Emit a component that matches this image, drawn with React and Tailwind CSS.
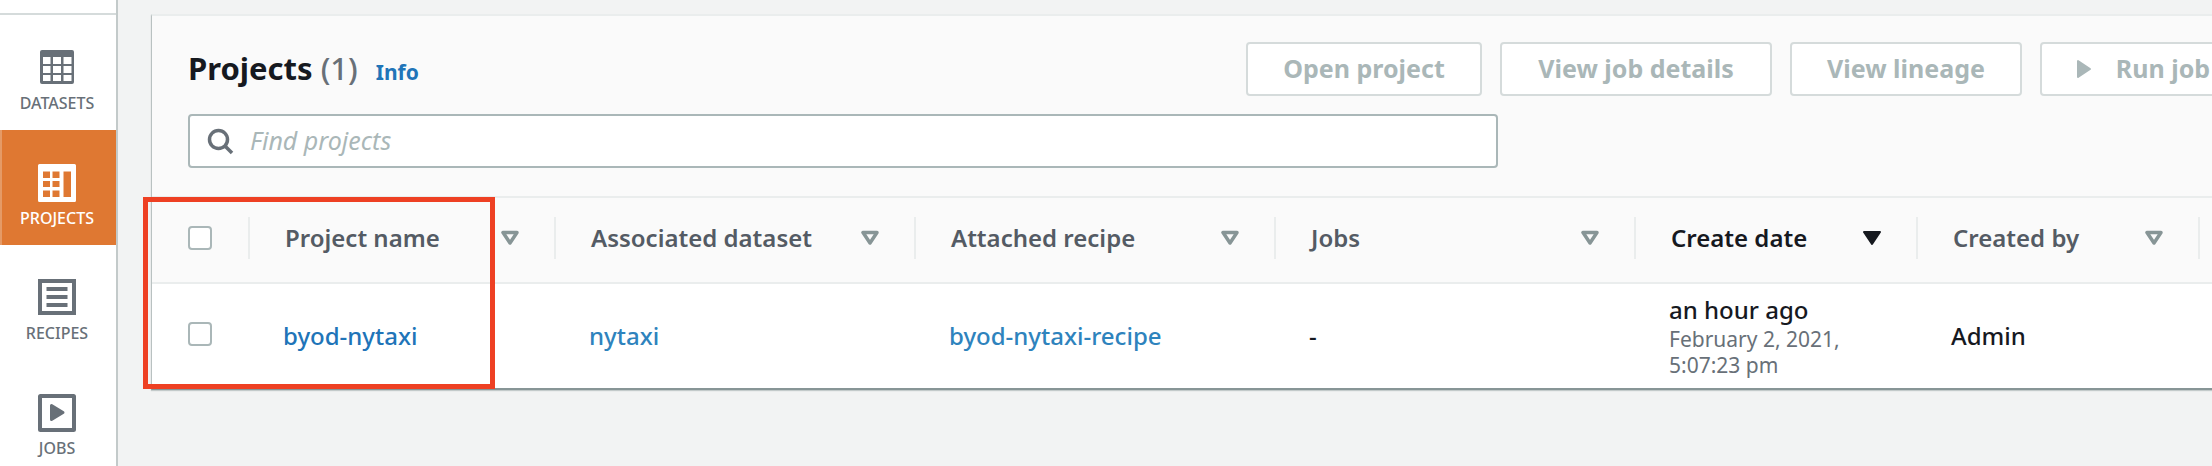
const navItems = [
  { label: 'DATASETS', icon: DatasetsIcon },
  { label: 'PROJECTS', icon: ProjectsIcon, active: true },
  { label: 'RECIPES', icon: RecipesIcon },
  { label: 'JOBS', icon: JobsIcon },
];

const columns = [
  { label: 'Project name' },
  { label: 'Associated dataset' },
  { label: 'Attached recipe' },
  { label: 'Jobs' },
  { label: 'Create date', sorted: true },
  { label: 'Created by' },
];

function DatasetsIcon() {
  return (
    <svg width="38" height="38" viewBox="0 0 38 38" fill="currentColor" fillRule="evenodd" aria-hidden="true">
      <path d="M4 1h30a2 2 0 0 1 2 2v30a2 2 0 0 1-2 2H4a2 2 0 0 1-2-2V3a2 2 0 0 1 2-2zM5 8v7h7.500V8zM15 8v7h8V8zM25.500 8v7H33.500V8zM5 17v7h7.500v-7zM15 17v7h8v-7zM25.500 17v7H33.500v-7zM5 26v6h7.500v-6zM15 26v6h8v-6zM25.500 26v6H33.500v-6z" />
    </svg>
  );
}

function ProjectsIcon() {
  return (
    <svg width="38" height="38" viewBox="0 0 38 38" fill="currentColor" fillRule="evenodd" aria-hidden="true">
      <path d="M1.500 0h35A1.500 1.500 0 0 1 38 1.500v35a1.500 1.500 0 0 1-1.500 1.500h-35A1.500 1.500 0 0 1 0 36.500v-35A1.500 1.500 0 0 1 1.500 0zM5 7.500v6.500h7V7.500zM14.500 7.500v6.500h7V7.500zM5 17v6h7v-6zM14.500 17v6h7v-6zM5 26.500v6.500h7v-6.500zM14.500 26.500v6.500h7v-6.500zM25.500 7.500v25.500H33V7.500z" />
    </svg>
  );
}

function RecipesIcon() {
  return (
    <svg width="38" height="38" viewBox="0 0 38 38" fill="none" stroke="currentColor" strokeWidth="4" aria-hidden="true">
      <path d="M2 2h34v32H2zM8.500 10h21M8.500 18h21M8.500 26h21" />
    </svg>
  );
}

function JobsIcon() {
  return (
    <svg width="38" height="38" viewBox="0 0 38 38" fill="none" stroke="currentColor" strokeWidth="4" strokeLinejoin="round" aria-hidden="true">
      <rect x="2" y="2" width="34" height="34" rx="0.500" />
      <path d="M13.500 11.500v14l11.500-7z" fill="currentColor" strokeWidth="3" />
    </svg>
  );
}

function SearchIcon() {
  return (
    <svg width="28" height="28" viewBox="0 0 28 28" fill="none" stroke="currentColor" strokeWidth="3.500" aria-hidden="true">
      <circle cx="12.500" cy="12.500" r="9" />
      <path d="M19 19l7 7" />
    </svg>
  );
}

function PlayIcon() {
  return (
    <svg width="16" height="20" viewBox="0 0 16 20" fill="currentColor" stroke="currentColor" strokeWidth="2" strokeLinejoin="round" aria-hidden="true">
      <path d="M2 2v16l12-8z" />
    </svg>
  );
}

function SortIcon({ filled }) {
  return (
    <svg width="18" height="16" viewBox="0 0 18 16" fill={filled ? 'currentColor' : 'none'} stroke="currentColor" strokeWidth={filled ? 2 : 3.5} strokeLinejoin="round" aria-hidden="true">
      <path d={filled ? 'M1 2h16L9 14z' : 'M2 2.500h14L9 13z'} />
    </svg>
  );
}

function Checkbox({ label }) {
  return (
    <input
      type="checkbox"
      aria-label={label}
      className="block size-6 appearance-none rounded-sm border-2 border-[#aab7b8] bg-white checked:bg-[#2074b8]"
    />
  );
}

function ActionButton({ children, className }) {
  return (
    <button
      type="button"
      disabled
      className={`flex h-[54px] shrink-0 items-center justify-center rounded-sm border-2 border-[#d5dbdb] bg-white text-[25px] font-bold whitespace-nowrap text-[#aab7b8] ${className}`}
    >
      {children}
    </button>
  );
}

function Sidebar() {
  return (
    <nav className="w-[118px] shrink-0 border-r-2 border-[#c3caca] bg-white">
      <div className="h-[15px] border-b-2 border-[#d5dbdb]" />
      <ul>
        {navItems.map(({ label, icon: Icon, active }) => (
          <li key={label}>
            <a
              href="#"
              className={`flex h-[115px] flex-col items-center gap-1 border-l-2 pt-[34px] pr-1 text-base font-medium ${
                active ? 'border-[#e59a66] bg-[#df7832] text-white' : 'border-transparent text-[#687078]'
              }`}
            >
              <Icon />
              {label}
            </a>
          </li>
        ))}
      </ul>
    </nav>
  );
}

function ProjectsTable() {
  return (
    <table className="w-full table-fixed border-separate border-spacing-0 text-left text-2xl">
      <colgroup>
        <col className="w-[98px]" />
        <col className="w-[306px]" />
        <col className="w-[360px]" />
        <col className="w-[360px]" />
        <col className="w-[360px]" />
        <col className="w-[282px]" />
        <col className="w-[282px]" />
        <col />
      </colgroup>
      <thead className="bg-[#fafafa] text-[#545b64]">
        <tr className="h-[88px]">
          <th className="border-y-2 border-[#eaeded] p-0 pb-1">
            <div className="flex h-[42px] items-center border-r-2 border-[#eaeded] pl-9">
              <Checkbox label="Select all projects" />
            </div>
          </th>
          {columns.map(({ label, sorted }) => (
            <th key={label} className="border-y-2 border-[#eaeded] p-0 pb-1">
              <button
                type="button"
                className={`flex h-[42px] w-full items-center justify-between border-r-2 border-[#eaeded] px-[35px] font-semibold ${
                  sorted ? 'text-[#16191f]' : ''
                }`}
              >
                {label}
                <span className={sorted ? 'text-[#16191f]' : 'text-[#879596]'}>
                  <SortIcon filled={sorted} />
                </span>
              </button>
            </th>
          ))}
          <th className="border-y-2 border-[#eaeded] p-0" />
        </tr>
      </thead>
      <tbody className="bg-white font-medium text-[#16191f]">
        <tr className="h-[104px]">
          <td className="p-0 pb-1 pl-9">
            <Checkbox label="Select byod-nytaxi" />
          </td>
          <td className="p-0 pl-[33px]">
            <a href="#" className="text-[#2074b8]">byod-nytaxi</a>
          </td>
          <td className="p-0 pl-[33px]">
            <a href="#" className="text-[#2e83bd]">nytaxi</a>
          </td>
          <td className="p-0 pl-[33px]">
            <a href="#" className="text-[#2e83bd]">byod-nytaxi-recipe</a>
          </td>
          <td className="p-0 pl-[33px]">-</td>
          <td className="p-0 pr-9 pl-[33px]">
            <div className="leading-8">an hour ago</div>
            <div className="text-[21px] leading-[26px] font-normal text-[#687078]">February 2, 2021, 5:07:23 pm</div>
          </td>
          <td className="p-0 pl-[33px]">Admin</td>
          <td className="p-0" />
        </tr>
      </tbody>
    </table>
  );
}

export default function App() {
  return (
    <div className="flex min-h-screen overflow-hidden bg-[#f2f3f3] font-['Noto_Sans','Open_Sans',sans-serif]">
      <Sidebar />
      <main className="min-w-0 flex-1 pt-3.5 pl-[33px]">
        <section className="relative -mr-[70px] border-t-2 border-b-2 border-l border-t-[#eaeded] border-b-[#879596] border-l-[#b9c1c1] bg-[#fafafa] shadow-[0_1px_1px_#c3caca]">
          <header className="flex flex-col gap-[18px] px-9 pt-[26px] pb-7">
            <div className="flex items-center justify-between">
              <div className="flex items-baseline gap-[18px]">
                <h1 className="text-[31px] leading-9 font-bold text-[#16191f]">
                  Projects <span className="font-medium text-[#687078]">(1)</span>
                </h1>
                <a href="#" className="text-[21px] font-bold text-[#2074b8]">Info</a>
              </div>
              <div className="flex gap-[18px]">
                <ActionButton className="w-[236px]">Open project</ActionButton>
                <ActionButton className="w-[272px]">View job details</ActionButton>
                <ActionButton className="w-[232px]">View lineage</ActionButton>
                <ActionButton className="w-[206px] gap-6">
                  <PlayIcon />
                  Run job
                </ActionButton>
              </div>
            </div>
            <label className="flex h-[54px] w-full max-w-[1310px] items-center gap-4 rounded-sm border-2 border-[#aab7b8] bg-white px-4 text-[#687078]">
              <SearchIcon />
              <input
                type="search"
                aria-label="Find projects"
                placeholder="Find projects"
                className="min-w-0 flex-1 text-[25px] text-[#16191f] outline-none placeholder:text-[#aab7b8] placeholder:italic"
              />
            </label>
          </header>
          <ProjectsTable />
          <div className="pointer-events-none absolute -bottom-px -left-[9px] h-[192px] w-[352px] border-[5px] border-[#ee4023]" />
        </section>
      </main>
    </div>
  );
}
